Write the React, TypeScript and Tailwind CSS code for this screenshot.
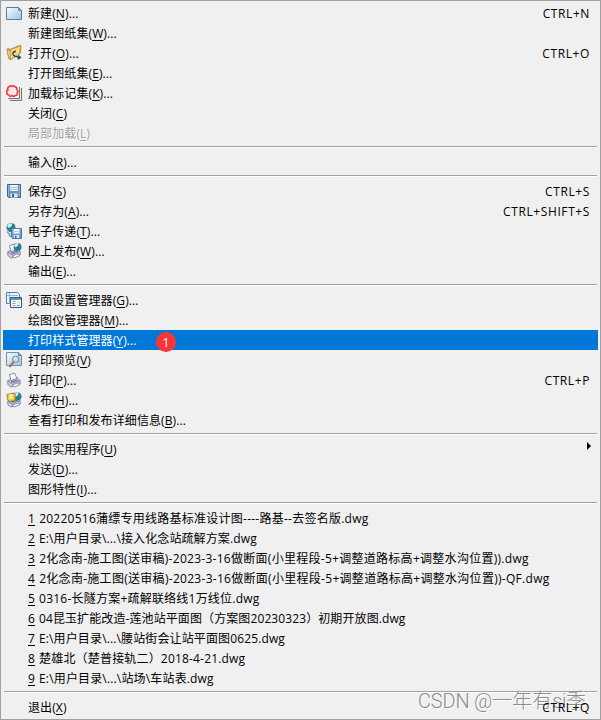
import type { ReactNode } from "react";
import clsx from "clsx";

type Item = {
  label: string;
  hotkey?: string;
  tail?: string;
  shortcut?: string;
  icon?: ReactNode;
  disabled?: boolean;
  selected?: boolean;
  submenu?: boolean;
  badge?: string;
  tracking?: string;
};

function Icon({ children }: { children: ReactNode }) {
  return (
    <svg viewBox="0 0 16 16" className="block size-4">
      {children}
    </svg>
  );
}

function Globe({ x, y, r }: { x: number; y: number; r: number }) {
  return (
    <g transform={`translate(${x} ${y}) scale(${r / 4})`}>
      <circle r="4" fill="#2478a8" />
      <path d="M-3.6-1.5Q-2-4 .5-4L1-2-.5-.5-2 .5z" fill="#d5f0ee" />
      <path d="M-3.5.5-1 1 0 3.5-1.5 3.5zM1-3 3-2 3.5 1 1.5 1z" fill="#328b58" />
    </g>
  );
}

function Printer() {
  return (
    <g stroke="#6d749c" strokeWidth=".8" strokeLinejoin="round">
      <path d="M1.8 8.5 11.5 6 14.2 8.5V12L5 15 1.8 12.5z" fill="#cdd1e6" />
      <path d="M3.5 2.5 8.5 1 11 6.5 5 8.5z" fill="#fafbff" />
      <path d="M2 9 5 11.5 14 8.7" fill="none" />
      <path d="M5 10 11.5 8.2" stroke="#3c456f" />
      <path d="M6 13 12 10.8 14 12.5 8.5 15z" fill="#f7f8ff" />
    </g>
  );
}

const newIcon = (
  <Icon>
    <defs>
      <linearGradient id="sheet" x1="0" y1="0" x2="1" y2="1">
        <stop stopColor="#f8fcff" />
        <stop offset="1" stopColor="#9fc4dd" />
      </linearGradient>
    </defs>
    <path d="M.5 2.5h12l3 3v9H.5z" fill="url(#sheet)" stroke="#557da5" />
    <path d="M12.5 2.5v3h3z" fill="#7ba6c8" stroke="#557da5" strokeWidth=".7" />
  </Icon>
);

const openIcon = (
  <Icon>
    <path d="M1 4 3 3.5 4 4.5 12 1 15 .6 14.6 8 4.5 15 2.5 13z" fill="#c69a38" stroke="#a58137" strokeWidth=".7" />
    <path d="M5 5 14 1.5 13 8.5 5 14z" fill="#f6db7a" />
    <path d="M1 4.5 5 6.5 4.2 14.5 2.8 13z" fill="#e9d08a" stroke="#a58137" strokeWidth=".5" />
    <path d="M10 6.2Q5.8 7 7.2 9.8 8.6 11.8 12 12" fill="none" stroke="#244363" strokeWidth="1.4" />
    <path d="M12.5 9.5 15.5 12.8 11.5 15z" fill="#244363" />
  </Icon>
);

const markupIcon = (
  <Icon>
    <path d="M2.5 4.5h13v11h-13z" fill="#e8e8e8" />
    <path d="M4 15.5h11.5V3M2 13.5h11.5V2" fill="none" stroke="#747474" />
    <path d="M1 2h11v10.5H1z" fill="#fff" />
    <path
      d="M3.5 1.5Q5 .2 6 1.5 8-.2 9 2 11.5 2.2 10.7 4.5 13 6.5 11 8 12 11 9 10.5 7.5 12.5 6 10.5 3.5 12.5 3 10 .2 10 1.2 7.5-.5 5.5 2 5 .8 2.5 3.5 1.5z"
      fill="#fbe6e6"
      stroke="#ef3434"
      strokeWidth="1.5"
    />
  </Icon>
);

const saveIcon = (
  <Icon>
    <path d="M1.5 1.5h13v13h-12l-1-1z" fill="#6a92bd" stroke="#3f6695" />
    <path d="M4 2h8v6H4z" fill="#eff7fc" />
    <path d="M4 4.5h8M4 6.5h8" stroke="#a3c2dc" />
    <path d="M4.5 10.5h7v4h-7z" fill="#dbe8f3" />
    <path d="M6 11h2v3H6z" fill="#3f6695" />
    <path d="M2.5 2v11M13.5 2v11" stroke="#91b3d4" />
  </Icon>
);

const transmitIcon = (
  <Icon>
    <Globe x={5} y={4.5} r={4.5} />
    <path d="M1 8.5 4 12M6 13H3.5V10" fill="none" stroke="#72a9d4" strokeWidth="1.5" />
    <path d="M5.5 5.5h10v10h-9l-1-1z" fill="#77a1cb" stroke="#477bad" />
    <path d="M7.5 6h6v4.5h-6z" fill="#f4f8fc" />
    <path d="M8 8.5h5" stroke="#b4cce0" />
    <path d="M8 12h5v3H8z" fill="#e4eef7" />
    <path d="M9 12.5h1.5V15H9z" fill="#3f6695" />
  </Icon>
);

const webIcon = (
  <Icon>
    <Printer />
    <Globe x={11.5} y={4} r={4} />
  </Icon>
);

const pageSetupIcon = (
  <Icon>
    <path d="M.5.5h11l2 2v9H.5z" fill="#eef5fb" stroke="#557da5" />
    <path d="M3.5 1v11M1 3.5h11" stroke="#8fb1d0" />
    <path d="M4.5 5.5h11v10h-11z" fill="#f9fcff" stroke="#31567f" />
    <path d="M5 7h10" stroke="#6594c1" strokeWidth="2" />
    <path d="M6.5 9.5h3M6.5 11.5h3M6.5 13.5h3M10.5 13.5H14" stroke="#869aaf" />
    <path d="M11 9.5h3v2h-3z" fill="#dfe9c7" />
  </Icon>
);

const previewIcon = (
  <Icon>
    <path d="M.5.5h12l3 3v10H.5z" fill="url(#sheet)" stroke="#6d90b3" />
    <path d="M12.5.5v3h3" fill="#7ba6c8" stroke="#557da5" />
    <path d="M7.5 10 3.5 15" stroke="#9b6548" strokeWidth="2" />
    <circle cx="9.7" cy="7.2" r="3.1" fill="#c9e1f4" stroke="#777d8a" />
    <path d="M8.2 5.8 10 5" stroke="#fff" />
  </Icon>
);

const printIcon = (
  <Icon>
    <Printer />
  </Icon>
);

const publishIcon = (
  <Icon>
    <Printer />
    <Globe x={11.5} y={4.5} r={4} />
    <path d="M1 2.5 7 1 9.5 3 9 8.5 3.5 9.5 1.5 7.5z" fill="#f0c93d" stroke="#94711c" strokeWidth=".8" />
    <path d="M3 3 6.5 3M3.5 7 5 5 7 6.5" fill="none" stroke="#fff8c1" strokeWidth="1.3" />
  </Icon>
);

const groups: Item[][] = [
  [
    { label: "新建", hotkey: "N", tail: "...", shortcut: "CTRL+N", icon: newIcon },
    { label: "新建图纸集", hotkey: "W", tail: "..." },
    { label: "打开", hotkey: "O", tail: "...", shortcut: "CTRL+O", icon: openIcon },
    { label: "打开图纸集", hotkey: "E", tail: "..." },
    { label: "加载标记集", hotkey: "K", tail: "...", icon: markupIcon },
    { label: "关闭", hotkey: "C" },
    { label: "局部加载", hotkey: "L", disabled: true },
  ],
  [{ label: "输入", hotkey: "R", tail: "..." }],
  [
    { label: "保存", hotkey: "S", shortcut: "CTRL+S", icon: saveIcon },
    { label: "另存为", hotkey: "A", tail: "...", shortcut: "CTRL+SHIFT+S" },
    { label: "电子传递", hotkey: "T", tail: "...", icon: transmitIcon },
    { label: "网上发布", hotkey: "W", tail: "...", icon: webIcon },
    { label: "输出", hotkey: "E", tail: "..." },
  ],
  [
    { label: "页面设置管理器", hotkey: "G", tail: "...", icon: pageSetupIcon },
    { label: "绘图仪管理器", hotkey: "M", tail: "..." },
    { label: "打印样式管理器", hotkey: "Y", tail: "...", selected: true, badge: "1" },
    { label: "打印预览", hotkey: "V", icon: previewIcon },
    { label: "打印", hotkey: "P", tail: "...", shortcut: "CTRL+P", icon: printIcon },
    { label: "发布", hotkey: "H", tail: "...", icon: publishIcon },
    { label: "查看打印和发布详细信息", hotkey: "B", tail: "..." },
  ],
  [
    { label: "绘图实用程序", hotkey: "U", submenu: true },
    { label: "发送", hotkey: "D", tail: "..." },
    { label: "图形特性", hotkey: "I", tail: "..." },
  ],
  [
    { label: "20220516蒲缥专用线路基标准设计图----路基--去签名版.dwg", tracking: "tracking-[0.25px]" },
    { label: "E:\\用户目录\\...\\接入化念站疏解方案.dwg", tracking: "tracking-[0.12px]" },
    {
      label: "2化念南-施工图(送审稿)-2023-3-16做断面(小里程段-5+调整道路标高+调整水沟位置)).dwg",
      tracking: "tracking-[0.28px]",
    },
    {
      label: "2化念南-施工图(送审稿)-2023-3-16做断面(小里程段-5+调整道路标高+调整水沟位置))-QF.dwg",
      tracking: "tracking-[0.29px]",
    },
    { label: "0316-长隧方案+疏解联络线1万线位.dwg", tracking: "tracking-[0.22px]" },
    { label: "04昆玉扩能改造-莲池站平面图（方案图20230323）初期开放图.dwg" },
    { label: "E:\\用户目录\\...\\腰站街会让站平面图0625.dwg", tracking: "tracking-[0.13px]" },
    { label: "楚雄北（楚普接轨二）2018-4-21.dwg", tracking: "tracking-[0.18px]" },
    { label: "E:\\用户目录\\...\\站场\\车站表.dwg", tracking: "tracking-[0.16px]" },
  ],
  [{ label: "退出", hotkey: "X", shortcut: "CTRL+Q" }],
];

function MenuItem({ item, number }: { item: Item; number?: number }) {
  return (
    <div
      className={clsx(
        "relative flex h-5 items-center pl-[3px] pr-2 whitespace-pre",
        item.selected && "bg-[#0078d7] text-white",
        item.disabled && "text-[#a0a0a0] [text-shadow:1px_1px_0_#fff]",
      )}
    >
      <div className="w-[22px] shrink-0">{item.icon}</div>
      <span className={clsx("pt-0.5", item.tracking ?? "tracking-[0.1px]")}>
        {number && <u className="mr-1 underline-offset-2">{number}</u>}
        {item.label}
        {item.hotkey && (
          <>
            (<u className="underline-offset-2">{item.hotkey}</u>)
          </>
        )}
        {item.tail}
      </span>
      {item.shortcut && <span className="ml-auto pt-0.5 tracking-[0.6px]">{item.shortcut}</span>}
      {item.submenu && (
        <svg viewBox="0 0 4 8" className="mr-[-1px] mb-1.5 ml-auto h-2 w-1">
          <path d="M0 0 4 4 0 8z" />
        </svg>
      )}
      {item.badge && (
        <span className="absolute top-[2px] left-[153px] flex size-5 items-center justify-center rounded-full bg-[#fb3438] text-[13px]">
          {item.badge}
        </span>
      )}
    </div>
  );
}

export default function App() {
  return (
    <div className="relative h-[720px] w-[601px] border border-[#a0a0a0] bg-[#f0f0f0] p-[2px] font-['Open_Sans','Noto_Sans_CJK_SC',sans-serif] text-[12px] leading-5 text-black">
      <span className="absolute right-[14px] bottom-[4px] font-['Roboto','Noto_Sans_CJK_SC',sans-serif] text-[20px] leading-7 font-light whitespace-nowrap text-[#8c8c8c] [text-shadow:1px_1px_0_#fff]">
        <span className="tracking-[-0.2px]">CSDN @</span>一年有<span className="tracking-[-0.4px]">si</span>季
      </span>
      {groups.map((items, g) => (
        <div key={g}>
          {g > 0 && <div className="mx-px mt-[3px] mb-1 h-0.5 border-t border-[#a0a0a0] bg-white" />}
          {items.map((item, i) => (
            <MenuItem key={i} item={item} number={g === 5 ? i + 1 : undefined} />
          ))}
        </div>
      ))}
    </div>
  );
}
